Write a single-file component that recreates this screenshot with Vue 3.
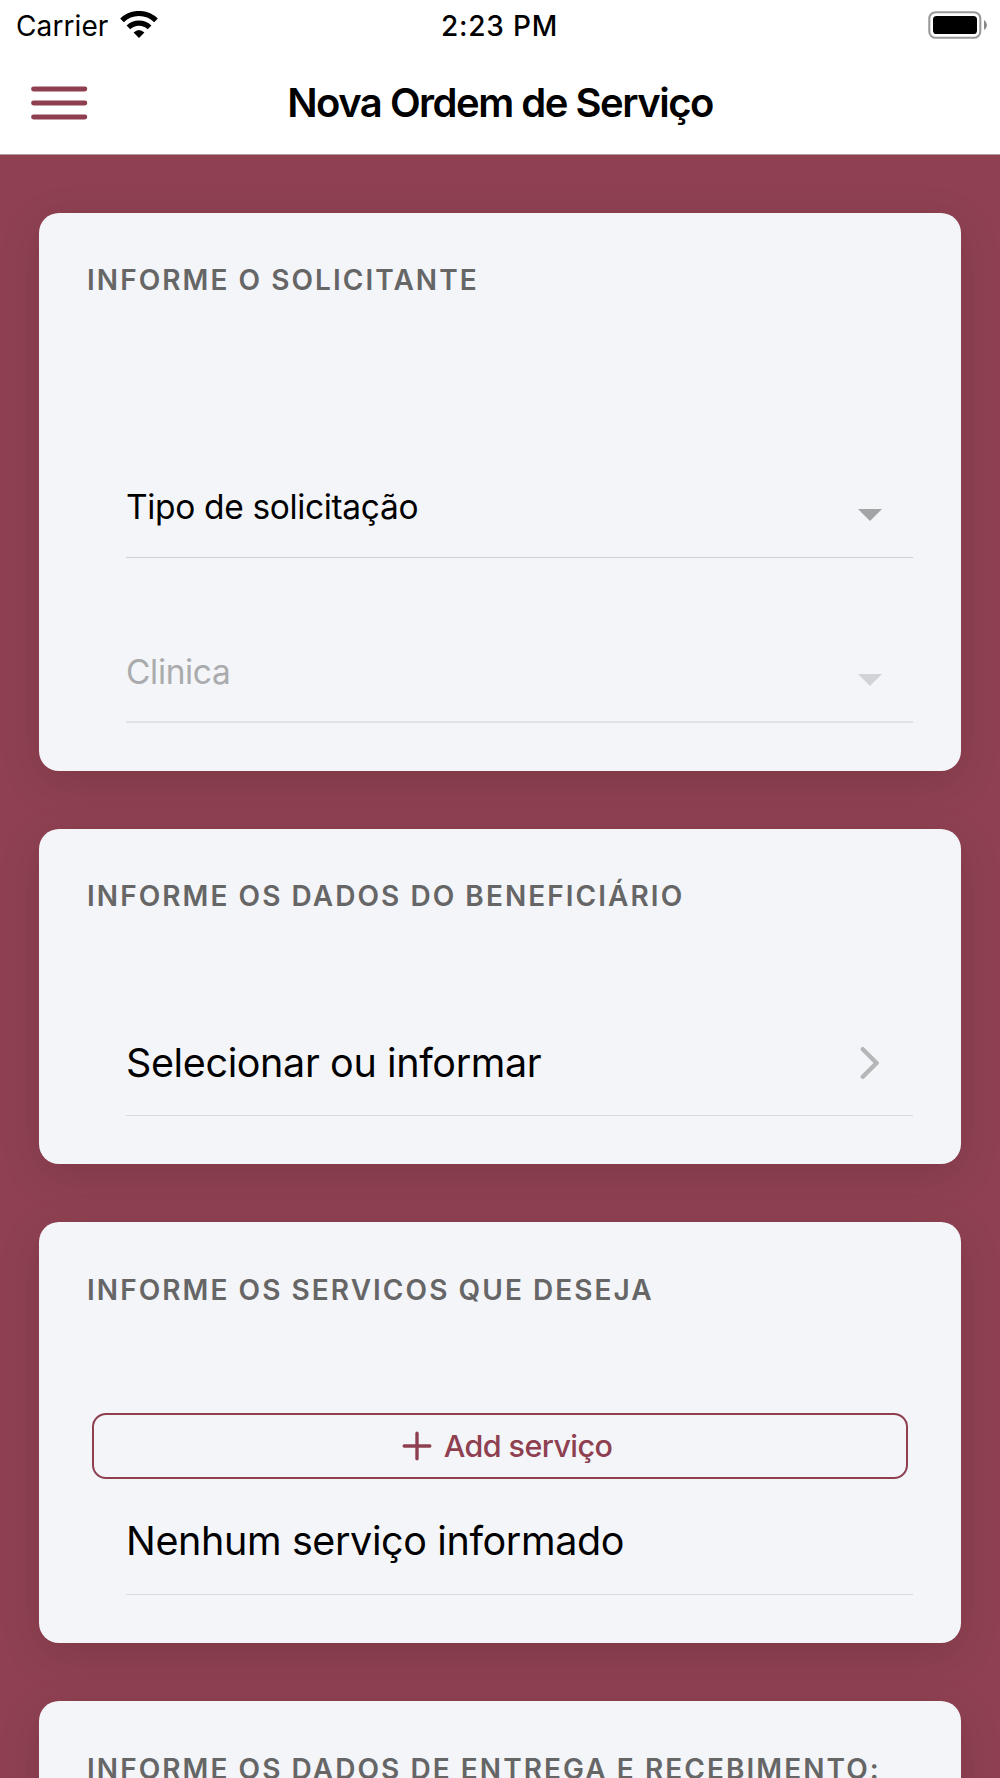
<template>
  <div class="page">
    <header class="header">
      <div class="status-bar">
        <div class="carrier">
          <span class="carrier-name">Carrier</span>
          <svg class="wifi" width="38" height="28" viewBox="0 0 38 28">
            <path d="M2 9.4 A24.4 24.4 0 0 1 36 9.4" fill="none" stroke="#000" stroke-width="5.2" />
            <path d="M8.4 16.4 A15.2 15.2 0 0 1 29.6 16.4" fill="none" stroke="#000" stroke-width="5.2" />
            <path d="M13.6 21.6 Q19 16.6 24.4 21.6 L19 27 Z" fill="#000" />
          </svg>
        </div>
        <span class="clock">2:23 PM</span>
        <svg class="battery" width="60" height="28" viewBox="0 0 60 28">
          <rect x="1.3" y="1.2" width="51" height="25.6" rx="6.4" fill="none" stroke="#999" stroke-width="2.1" />
          <rect x="5" y="5" width="44" height="18" rx="3.6" fill="#000" />
          <path d="M56 9 Q59 11 59 14 Q59 17 56 19 Z" fill="#888" />
        </svg>
      </div>
      <div class="toolbar">
        <button class="menu" aria-label="Menu" @click="menuOpen = !menuOpen">
          <svg width="57" height="34" viewBox="0 0 57 34">
            <path d="M2.5 3H53.9M2.5 17H53.9M2.5 31H53.9" fill="none" stroke="currentColor" stroke-width="4.8" stroke-linecap="round" />
          </svg>
        </button>
        <h1 class="title">Nova Ordem de Serviço</h1>
      </div>
    </header>

    <main class="content">
      <section class="card solicitante">
        <h2>INFORME O SOLICITANTE</h2>
        <div
          v-for="campo in campos"
          :key="campo.label"
          class="select"
          :class="{ disabled: campo.disabled }"
        >
          <span class="select-label">{{ campo.label }}</span>
          <svg class="arrow" width="24" height="12" viewBox="0 0 24 12">
            <path d="M0 0H24L12 12Z" fill="currentColor" />
          </svg>
        </div>
      </section>

      <section class="card beneficiario">
        <h2>INFORME OS DADOS DO BENEFICIÁRIO</h2>
        <div class="item">
          <span>Selecionar ou informar</span>
          <svg class="chevron" width="20" height="34" viewBox="0 0 20 34">
            <path d="M2.8 3.2 L16.6 17 L2.8 30.8" fill="none" stroke="#b5b6b8" stroke-width="4.4" stroke-linecap="round" stroke-linejoin="round" />
          </svg>
        </div>
      </section>

      <section class="card servicos">
        <h2>INFORME OS SERVICOS QUE DESEJA</h2>
        <button class="add" @click="addServico">
          <svg width="30" height="30" viewBox="0 0 30 30">
            <path d="M15 2.2V27.8M2.2 15H27.8" fill="none" stroke="currentColor" stroke-width="3.4" stroke-linecap="round" />
          </svg>
          <span>Add serviço</span>
        </button>
        <div v-if="servicos.length === 0" class="item vazio">
          <span>Nenhum serviço informado</span>
        </div>
        <div v-for="(servico, i) in servicos" :key="i" class="item vazio">
          <span>{{ servico }}</span>
        </div>
      </section>

      <section class="card entrega">
        <h2>INFORME OS DADOS DE ENTREGA E RECEBIMENTO:</h2>
      </section>
    </main>
  </div>
</template>

<script setup>
import { ref } from 'vue'

const menuOpen = ref(false)
const servicos = ref([])

const campos = ref([
  { label: 'Tipo de solicitação', disabled: false },
  { label: 'Clinica', disabled: true }
])

const addServico = () => {
  servicos.value.push('Serviço ' + (servicos.value.length + 1))
}
</script>

<style>
body {
  background: #8f4152;
}
</style>

<style scoped>
.page {
  width: 1000px;
  height: 1778px;
  overflow: hidden;
  display: flex;
  flex-direction: column;
  background: #8f4152;
  font-family: Inter, "Liberation Sans", sans-serif;
  color: #000;
}

.header {
  height: 154px;
  flex: none;
  background: #fff;
  border-bottom: 1px solid #b09ca1;
}

.status-bar {
  height: 51px;
  display: grid;
  grid-template-columns: 1fr auto 1fr;
  align-items: center;
  padding: 0 12px 0 16px;
  box-sizing: border-box;
}

.carrier {
  display: flex;
  align-items: center;
  gap: 12px;
}

.carrier-name,
.clock {
  padding-top: 1px;
  font-size: 28px;
  line-height: 51px;
}

.carrier-name {
  letter-spacing: 0.1px;
}

.wifi {
  margin-top: -3px;
}

.clock {
  font-weight: 500;
  letter-spacing: 0.8px;
  /* the side columns have different padding */
  padding-right: 5px;
}

.battery {
  justify-self: end;
  margin-top: -2px;
}

.toolbar {
  height: 103px;
  display: grid;
  grid-template-columns: 120px 1fr 120px;
  align-items: center;
}

.menu {
  padding: 0;
  margin-left: 31px;
  border: none;
  background: none;
  color: #8e4051;
  display: flex;
}

.title {
  margin: 0 0 1px;
  text-align: center;
  font-size: 40px;
  font-weight: 600;
  letter-spacing: -1.5px;
}

.content {
  padding: 58px 39px 0;
  display: flex;
  flex-direction: column;
  gap: 58px;
}

.card {
  flex: none;
  box-sizing: border-box;
  padding: 47px 48px 0 49px;
  background: #f4f5f8;
  border-radius: 20px;
  box-shadow: 0 10.7px 42.7px rgba(0, 0, 0, 0.12);
}

h2 {
  margin: 0 0 94px -1px;
  font-size: 28px;
  line-height: 40px;
  font-weight: 600;
  letter-spacing: 2.06px;
  color: #666;
  white-space: nowrap;
}

.solicitante {
  height: 558px;
}

.beneficiario {
  height: 335px;
}

.servicos {
  height: 421px;
  padding-top: 48px;
}

.entrega {
  height: 300px;
  padding-top: 48px;
}

.select,
.item {
  margin-left: 38px;
  display: flex;
  align-items: center;
  justify-content: space-between;
  box-sizing: border-box;
}

.select {
  height: 164px;
  padding: 63px 31px 0 0;
  border-bottom: 1px solid #cfd0d4;
  font-size: 33.5px;
  letter-spacing: -0.35px;
}

.arrow {
  margin-top: 16px;
  color: #a2a4a6;
}

.select.disabled {
  height: 165px;
  padding-top: 64px;
  border-bottom: 2px solid #e1e2e6;
}

.select.disabled .select-label {
  color: #aaabad;
}

.select.disabled .arrow {
  color: #d1d3d6;
}

.item {
  height: 106px;
  padding-right: 33px;
  border-bottom: 1px solid #d9dade;
  font-size: 39.5px;
  letter-spacing: -0.38px;
}

.add {
  margin: 103px 5px 0 4px;
  width: 816px;
  height: 66px;
  padding: 0 0 0 14px;
  display: flex;
  align-items: center;
  justify-content: center;
  gap: 12px;
  box-sizing: border-box;
  border: 2px solid #8e4051;
  border-radius: 14px;
  background: none;
  color: #8e4051;
  font-family: inherit;
  font-size: 30.5px;
  font-weight: 500;
  letter-spacing: -0.6px;
}

.add span {
  padding-bottom: 2px;
}

.servicos h2 {
  margin-bottom: 0;
}

.vazio {
  height: 116px;
  padding-top: 8px;
}
</style>
